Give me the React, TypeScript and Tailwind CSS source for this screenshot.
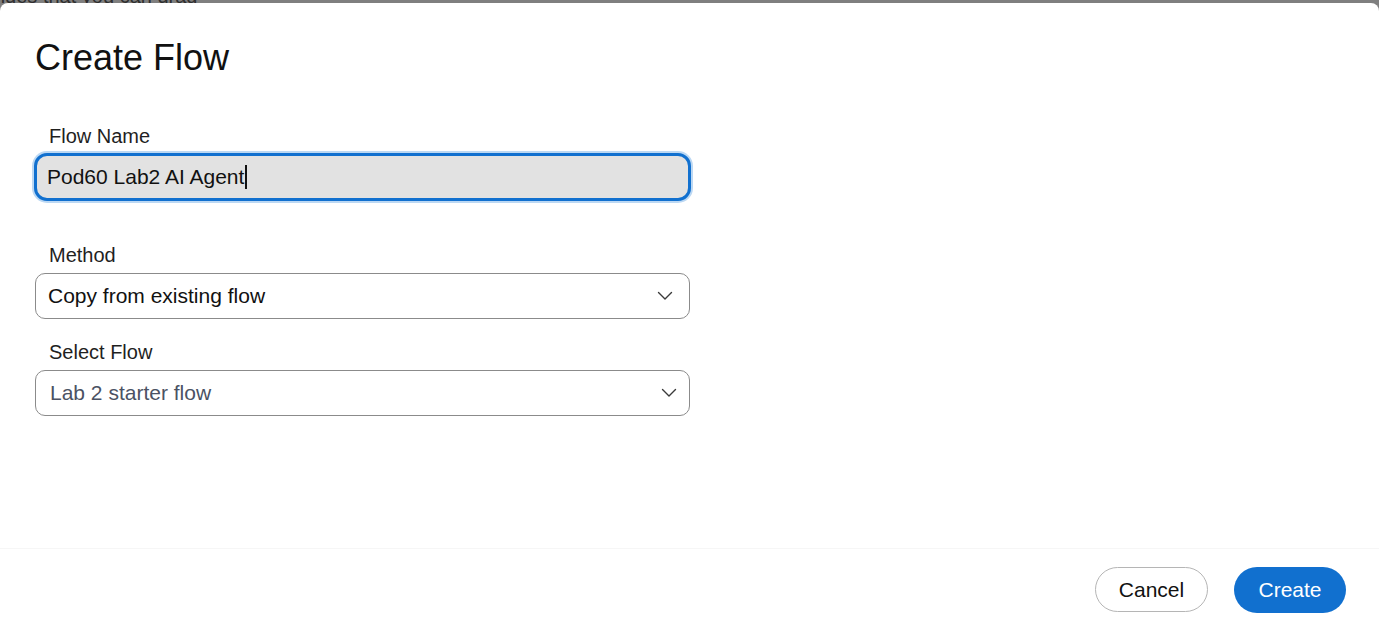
const font = { fontFamily: '"Liberation Sans", Arial, sans-serif' };

function Chevron() {
  return (
    <svg width="16" height="10" viewBox="0 0 16 10" fill="none" className="shrink-0">
      <path d="M1.5 1.5 L8 8 L14.5 1.5" stroke="#3a3a3a" strokeWidth="1.4" strokeLinecap="round" strokeLinejoin="round" />
    </svg>
  );
}

interface SelectProps {
  label: string;
  value: string;
  muted?: boolean;
}

function SelectField({ label, value, muted }: SelectProps) {
  return (
    <div className="flex flex-col">
      <label className="pl-[14px] text-[20px] leading-[24px] text-[#1f1f1f]">{label}</label>
      <div
        className={`mt-[6px] flex h-[46px] w-[655px] items-center justify-between rounded-[10px] border border-[#8b8b8b] bg-white pl-[12px] ${muted ? 'pr-[12px]' : 'pr-[16px]'}`}
      >
        <span className={`text-[21px] ${muted ? 'pl-[2px] text-[#4b5263]' : 'text-[#111]'}`}>{value}</span>
        <Chevron />
      </div>
    </div>
  );
}

export default function App() {
  return (
    <div className="flex h-[644px] w-[1379px] flex-col overflow-hidden bg-[#7f7f7f]" style={font}>
      {/* page behind the overlay, mostly hidden */}
      <div className="h-[3px] shrink-0 overflow-hidden">
        <p className="-mt-[14px] -ml-[6px] text-[20px] leading-[20px] text-[#2e2e2e]">ndes that you can drag</p>
      </div>
      <div className="flex flex-1 flex-col rounded-t-[8px] bg-white">
        <div className="flex-1 px-[35px] pt-[34px]">
          <h1 className="text-[36px] leading-[42px] text-[#111]">Create Flow</h1>

          <div className="mt-[45px] flex flex-col">
            <label className="pl-[14px] text-[20px] leading-[24px] text-[#1f1f1f]">Flow Name</label>
            <div className="-ml-[3px] mt-[3px] w-[661px] rounded-[15px] bg-[#bcd8f3] p-[2px]">
              <div className="flex h-[48px] items-center rounded-[13px] border-[3px] border-[#1170cf] bg-[#e2e2e2] pl-[10px]">
                <span className="text-[21px] text-[#111]">Pod60 Lab2 AI Agent</span>
                <span className="ml-[1px] h-[24px] w-[1.5px] bg-[#111]" />
              </div>
            </div>
          </div>

          <div className="mt-[40px] flex flex-col gap-[21px]">
            <SelectField label="Method" value="Copy from existing flow" />
            <SelectField label="Select Flow" value="Lab 2 starter flow" muted />
          </div>
        </div>

        <div className="flex h-[96px] items-start justify-end gap-[26px] border-t border-[#f6f6f6] bg-white pt-[18px] pr-[33px]">
          <button className="h-[45px] w-[113px] rounded-full border border-[#b5b5b5] bg-white text-[21px] text-[#111]">
            Cancel
          </button>
          <button className="h-[46px] w-[112px] rounded-full bg-[#1170cf] text-[21px] text-white">
            Create
          </button>
        </div>
      </div>
    </div>
  );
}
